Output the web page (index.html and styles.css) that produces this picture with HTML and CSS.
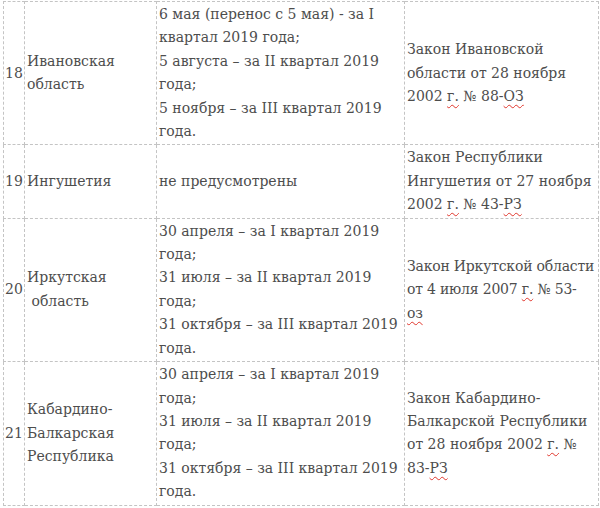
FILE: index.html
```html
<!DOCTYPE html>
<html lang="ru">
<head>
<meta charset="utf-8">
<link rel="stylesheet" href="styles.css">
</head>
<body>
<table class="holidays">
  <colgroup>
    <col class="c-num"><col class="c-region"><col class="c-dates"><col class="c-law">
  </colgroup>
  <tr>
    <td class="num">18</td>
    <td>Ивановская<br>область</td>
    <td>6 мая (перенос с 5 мая) - за I квартал 2019 года;<br>5 августа – за II квартал 2019 года;<br>5 ноября – за III квартал 2019 года.</td>
    <td>Закон Ивановской области от 28 ноября 2002 <span class="sp">г.</span> № 88-<span class="sp">ОЗ</span></td>
  </tr>
  <tr>
    <td class="num">19</td>
    <td>Ингушетия</td>
    <td>не предусмотрены</td>
    <td>Закон Республики Ингушетия от 27 ноября 2002 <span class="sp">г.</span> № 43-<span class="sp">РЗ</span></td>
  </tr>
  <tr>
    <td class="num">20</td>
    <td>Иркутская<br>&nbsp;область</td>
    <td>30 апреля – за I квартал 2019 года;<br>31 июля – за II квартал 2019 года;<br>31 октября – за III квартал 2019 года.</td>
    <td class="tight">Закон Иркутской области<br>от 4 июля 2007 <span class="sp">г.</span> № 53-<br><span class="sp">оз</span></td>
  </tr>
  <tr>
    <td class="num">21</td>
    <td>Кабардино-<br>Балкарская<br>Республика</td>
    <td>30 апреля – за I квартал 2019 года;<br>31 июля – за II квартал 2019 года;<br>31 октября – за III квартал 2019 года.</td>
    <td>Закон Кабардино-Балкарской Республики от 28 ноября 2002 <span class="sp">г.</span> № 83-<span class="sp">РЗ</span></td>
  </tr>
</table>
</body>
</html>
```

FILE: styles.css
```css
html, body {
  margin: 0;
  padding: 0;
  background: #fff;
}
body {
  padding: 1px 0 0 3px;
  font-family: "DejaVu Serif", "Liberation Serif", serif;
  font-size: 14px;
  line-height: 23.4px;
  color: #4d4d4d;
}
.holidays {
  border-collapse: collapse;
  table-layout: fixed;
  width: 595px;
}
.c-num { width: 21px; }
.c-region { width: 132px; }
.c-dates { width: 248px; }
.c-law { width: 194px; }
.holidays td {
  border: 1px dashed #c4c4c4;
  padding: 1px 1px 1px 2px;
  vertical-align: middle;
  text-align: left;
}
.holidays td.num {
  padding-left: 1px;
  padding-right: 0;
}
.holidays td.tight {
  white-space: nowrap;
  letter-spacing: -0.2px;
}
.sp {
  text-decoration: underline wavy #e0362c;
  text-decoration-thickness: 1px;
  text-underline-offset: 3px;
}
```
